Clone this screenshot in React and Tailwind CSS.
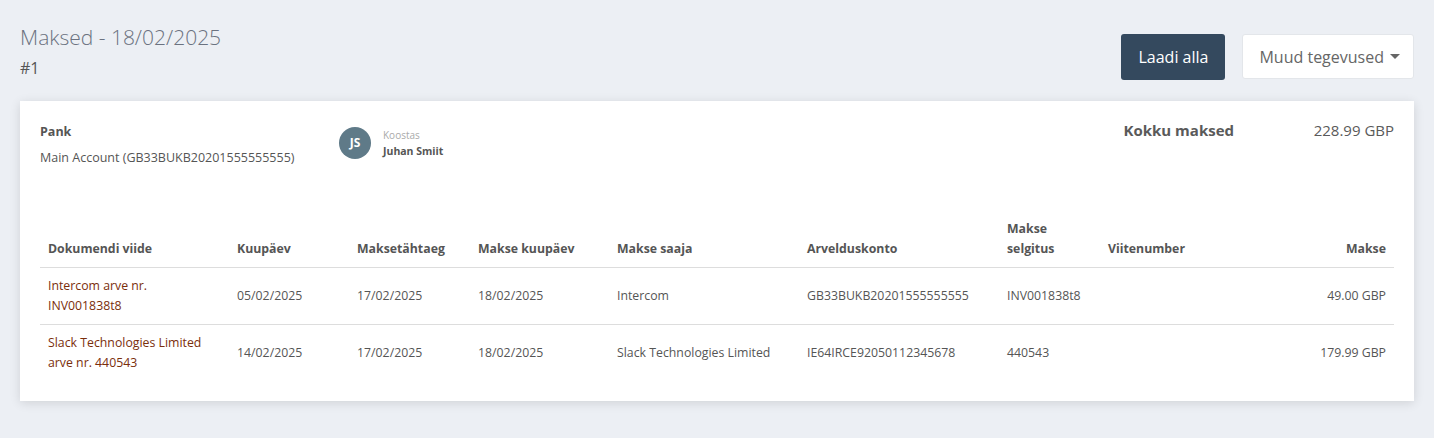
const rows = [
  {
    doc: ['Intercom arve nr.', 'INV001838t8'],
    date: '05/02/2025',
    due: '17/02/2025',
    paid: '18/02/2025',
    payee: 'Intercom',
    account: 'GB33BUKB20201555555555',
    desc: 'INV001838t8',
    ref: '',
    amount: '49.00 GBP',
  },
  {
    doc: ['Slack Technologies Limited', 'arve nr. 440543'],
    date: '14/02/2025',
    due: '17/02/2025',
    paid: '18/02/2025',
    payee: 'Slack Technologies Limited',
    account: 'IE64IRCE92050112345678',
    desc: '440543',
    ref: '',
    amount: '179.99 GBP',
  },
];

const App = () => {
  return (
    <div className="min-h-[438px] bg-[#eceff4] px-5 pt-[22px] pb-9 font-['Open_Sans',sans-serif] text-[#555]">

      {/* Header */}
      <div className="flex items-start justify-between">
        <div>
          <h1 className="text-[21px] leading-[30px] font-light text-[#6b7280]">Maksed - 18/02/2025</h1>
          <div className="mt-[5px] text-[16px] leading-[22px] text-[#555]">#1</div>
        </div>
        <div className="flex gap-[17px] pt-3">
          <button className="h-[46px] px-[17px] rounded-[3px] bg-[#34495e] text-white text-[16px]">
            Laadi alla
          </button>
          <button className="h-[45px] pl-4 pr-[13px] rounded-[3px] bg-white border border-[#e3e6ea] text-[#666] text-[16px] flex items-center">
            Muud tegevused
            <span className="ml-[6px] w-0 h-0 border-l-[5px] border-r-[5px] border-t-[5px] border-l-transparent border-r-transparent border-t-[#666]" />
          </button>
        </div>
      </div>

      {/* Card */}
      <div className="mt-[21px] bg-white shadow-[0_2px_10px_rgba(0,0,0,0.12)] px-5 pt-[23px] pb-5">
        <div className="flex items-start">
          <div className="w-[299px]">
            <div className="text-[12.5px] font-bold leading-4">Pank</div>
            <div className="mt-[10px] text-[12.5px] leading-4">Main Account (GB33BUKB20201555555555)</div>
          </div>
          <div className="flex items-center gap-3 pt-[2px]">
            <div className="w-8 h-8 rounded-full bg-[#5f7a88] flex items-center justify-center text-white text-[12px] font-bold">JS</div>
            <div className="pt-[2px]">
              <div className="text-[10px] leading-[14px] text-[#aaa]">Koostas</div>
              <div className="mt-[1px] text-[10.5px] leading-[16px] font-bold">Juhan Smiit</div>
            </div>
          </div>
          <div className="ml-auto flex items-baseline -mt-[5px]">
            <div className="text-[15px] font-bold text-[#5a5a5a]">Kokku maksed</div>
            <div className="w-[160px] text-right text-[15px] text-[#5a5a5a]">228.99 GBP</div>
          </div>
        </div>

        <table className="mt-[53px] w-full table-fixed text-[12.3px] border-collapse">
          <colgroup>
            <col className="w-[189px]" />
            <col className="w-[120px]" />
            <col className="w-[121px]" />
            <col className="w-[139px]" />
            <col className="w-[190px]" />
            <col className="w-[200px]" />
            <col className="w-[101px]" />
            <col className="w-[150px]" />
            <col />
          </colgroup>
          <thead>
            <tr className="border-b border-[#ddd] text-left font-bold text-[#555]">
              <th className="px-2 pb-2 align-bottom leading-5">Dokumendi viide</th>
              <th className="px-2 pb-2 align-bottom leading-5">Kuupäev</th>
              <th className="px-2 pb-2 align-bottom leading-5">Maksetähtaeg</th>
              <th className="px-2 pb-2 align-bottom leading-5">Makse kuupäev</th>
              <th className="px-2 pb-2 align-bottom leading-5">Makse saaja</th>
              <th className="px-2 pb-2 align-bottom leading-5">Arvelduskonto</th>
              <th className="px-2 pb-2 align-bottom leading-5">Makse selgitus</th>
              <th className="px-2 pb-2 align-bottom leading-5">Viitenumber</th>
              <th className="px-2 pb-2 align-bottom leading-5 text-right">Makse</th>
            </tr>
          </thead>
          <tbody>
            {rows.map((r, i) => (
              <tr key={i} className={i === 0 ? 'border-b border-[#ddd]' : ''}>
                <td className="px-2 py-2 leading-5 text-[#7a2e0c]">
                  {r.doc[0]}<br />{r.doc[1]}
                </td>
                <td className="px-2 py-2 leading-5">{r.date}</td>
                <td className="px-2 py-2 leading-5">{r.due}</td>
                <td className="px-2 py-2 leading-5">{r.paid}</td>
                <td className="px-2 py-2 leading-5">{r.payee}</td>
                <td className="px-2 py-2 leading-5">{r.account}</td>
                <td className="px-2 py-2 leading-5">{r.desc}</td>
                <td className="px-2 py-2 leading-5">{r.ref}</td>
                <td className="px-2 py-2 leading-5 text-right">{r.amount}</td>
              </tr>
            ))}
          </tbody>
        </table>
      </div>
    </div>
  );
};

export default App;
